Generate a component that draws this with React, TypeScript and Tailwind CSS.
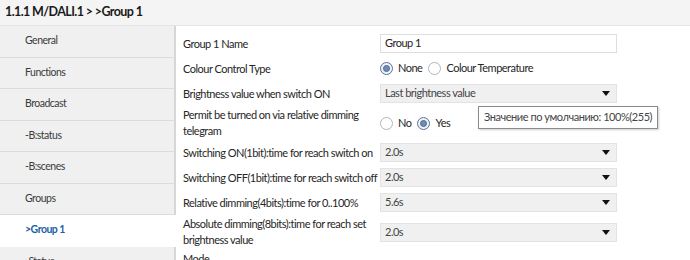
import React from 'react';

const navItems = ['General', 'Functions', 'Broadcast', '-B:status', '-B:scenes', 'Groups', '>Group 1', '-Status'];

const Radio: React.FC<{ checked?: boolean; label: string }> = ({ checked, label }) => (
  <div className="flex items-center">
    <span
      className={
        checked
          ? 'w-[13px] h-[13px] rounded-full border border-[#5d7291] bg-[#eef2f8] flex items-center justify-center'
          : 'w-[13px] h-[13px] rounded-full border border-[#b5b5b5] bg-white'
      }
    >
      {checked && <span className="w-[7px] h-[7px] rounded-full bg-[#6e8bb5] border border-[#4e6a94]" />}
    </span>
    <span className="ml-[5px]">{label}</span>
  </div>
);

const Select: React.FC<{ value: string }> = ({ value }) => (
  <div className="w-[237px] h-[19px] bg-[#f0f0f0] border border-[#e3e3e3] flex items-center justify-between pl-[4px] pr-[6px] text-[#444]">
    <span>{value}</span>
    <svg width="8" height="5" viewBox="0 0 8 5">
      <path d="M0 0 H8 L4 5 Z" fill="#111" />
    </svg>
  </div>
);

const Row: React.FC<{ label: React.ReactNode; h: string; children?: React.ReactNode }> = ({ label, h, children }) => (
  <div className={`flex items-center ${h}`}>
    <div className="w-[197px] shrink-0 leading-[16px] whitespace-nowrap">{label}</div>
    <div className="flex items-center">{children}</div>
  </div>
);

const App: React.FC = () => {
  return (
    <div className="w-[690px] h-[260px] overflow-hidden bg-white text-[11px] tracking-[-0.5px] text-[#262626]" style={{ fontFamily: 'Lato, sans-serif' }}>
      <div className="h-[26px] bg-[#f4f4f4] border-b border-[#e4e4e4] flex items-center pl-[5px] text-[12.5px] tracking-[-0.6px] font-bold text-[#1a1a1a]">
        1.1.1 M/DALI.1 &gt;&nbsp;&gt;Group 1
      </div>
      <div className="flex">
        <div className="w-[176px] shrink-0 text-[10.5px] tracking-[-0.5px]">
          {navItems.map((item) => {
            const active = item === '>Group 1';
            return (
              <div
                key={item}
                className={
                  active
                    ? 'h-[31.5px] bg-white border-b border-white flex items-center pl-[25px] text-[#1f5fa6] font-bold'
                    : 'h-[31.5px] bg-[#f0f0f0] border-b border-[#dcdcdc] border-r-[2px] border-r-[#d6d6d6] flex items-center pl-[25px] text-[#3a3a3a]'
                }
              >
                {item}
              </div>
            );
          })}
        </div>
        <div className="relative flex-1 pl-[7px] pt-[5px]">
          <Row label="Group 1 Name" h="h-[25px]">
            <div className="w-[237px] h-[19px] bg-white border border-[#dedede] flex items-center pl-[4px] text-[#222]">Group 1</div>
          </Row>
          <Row label="Colour Control Type" h="h-[25px]">
            <div className="flex items-center gap-[6px]">
              <Radio checked label="None" />
              <Radio label="Colour Temperature" />
            </div>
          </Row>
          <Row label="Brightness value when switch ON" h="h-[25px]">
            <Select value="Last brightness value" />
          </Row>
          <Row label={<>Permit be turned on via relative dimming<br />telegram</>} h="h-[34px]">
            <div className="flex items-center gap-[6px]">
              <Radio label="No" />
              <Radio checked label="Yes" />
            </div>
          </Row>
          <Row label="Switching ON(1bit):time for reach switch on" h="h-[25px]">
            <Select value="2.0s" />
          </Row>
          <Row label="Switching OFF(1bit):time for reach switch off" h="h-[25px]">
            <Select value="2.0s" />
          </Row>
          <Row label="Relative dimming(4bits):time for 0..100%" h="h-[25px]">
            <Select value="5.6s" />
          </Row>
          <Row label={<>Absolute dimming(8bits):time for reach set<br />brightness value</>} h="h-[34px]">
            <Select value="2.0s" />
          </Row>
          <Row label="Mode" h="h-[20px]">
            <div className="w-[160px] border-t-2 border-dotted border-[#a8a8a8] mt-[8px]" />
          </Row>
          <div className="absolute left-[302px] top-[80px] h-[23px] px-[5px] flex items-center bg-white border border-[#8a8a8a] shadow-[1px_1px_2px_rgba(0,0,0,0.2)] text-[#444] whitespace-nowrap tracking-[-0.45px]">
            Значение по умолчанию: 100%(255)
          </div>
        </div>
      </div>
    </div>
  );
};

export default App;
